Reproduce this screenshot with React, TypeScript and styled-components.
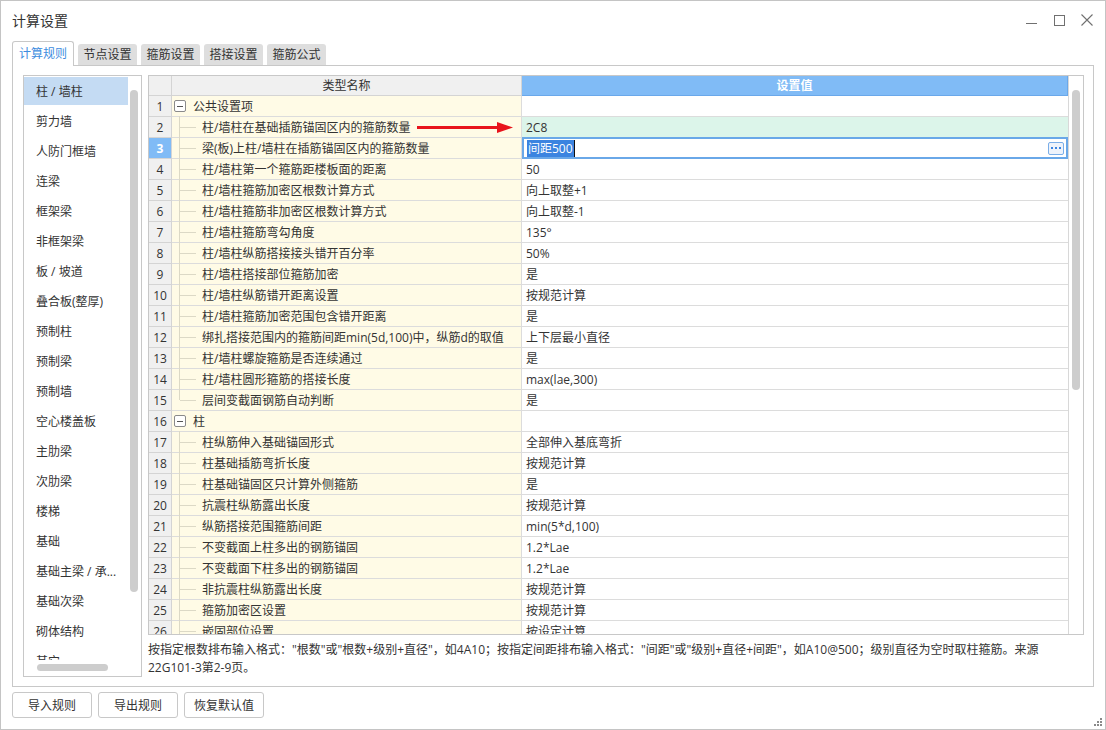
import React from 'react';
import styled, { createGlobalStyle } from 'styled-components';

const Global = createGlobalStyle`
  html, body { margin: 0; padding: 0; background: #fff; }
  body {
    font-family: "Open Sans", "Noto Sans CJK SC", sans-serif;
    font-size: 12px;
    color: #333;
  }
  * { box-sizing: border-box; }
`;

const Window = styled.div`
  position: relative;
  width: 1106px;
  height: 730px;
  border: 1px solid #c4c4c4;
  background: #fff;
  display: flex;
  flex-direction: column;
  overflow: hidden;
`;

const TitleBar = styled.div`
  height: 40px;
  flex: none;
  display: flex;
  align-items: center;
  justify-content: space-between;
  padding-left: 11px;
  padding-right: 4px;
`;

const Title = styled.div`
  font-size: 14px;
  color: #333;
  line-height: 20px;
`;

const Controls = styled.div`
  align-self: flex-start;
  margin-top: 5px;
  display: flex;
`;

const ControlButton = styled.div`
  width: 28px;
  height: 28px;
  display: flex;
  align-items: center;
  justify-content: center;
  color: #707070;
`;

const Body = styled.div`
  padding: 0 11px;
  display: flex;
  flex-direction: column;
`;

const TabStrip = styled.div`
  height: 24px;
  display: flex;
  align-items: flex-end;
  gap: 4px;
  position: relative;
  z-index: 1;
`;

const Tab = styled.div<{ $active?: boolean }>`
  width: ${p => (p.$active ? 62 : 59)}px;
  height: ${p => (p.$active ? 25 : 21)}px;
  margin-bottom: ${p => (p.$active ? -1 : 0)}px;
  display: flex;
  align-items: center;
  justify-content: center;
  border-radius: 3px 3px 0 0;
  font-size: 12px;
  line-height: 16px;
  background: ${p => (p.$active ? '#fff' : '#dedede')};
  color: ${p => (p.$active ? '#3d8de0' : '#333')};
  border: ${p => (p.$active ? '1px solid #c8c8c8' : 'none')};
  border-bottom: none;
`;

const Panel = styled.div`
  height: 622px;
  border: 1px solid #c8c8c8;
  padding: 9px 9px 9px 10px;
  display: flex;
  gap: 6px;
`;

const ListBox = styled.div`
  position: relative;
  width: 119px;
  height: 602px;
  border: 1px solid #c8c8c8;
  overflow: hidden;
  padding-top: 1px;
`;

const ListItem = styled.div<{ $selected?: boolean }>`
  width: 104px;
  height: 28px;
  margin-bottom: 2px;
  padding-left: 12px;
  padding-top: 2px;
  line-height: 26px;
  white-space: nowrap;
  font-size: 12px;
  color: #333;
  background: ${p => (p.$selected ? '#c4dbf3' : 'transparent')};
`;

const VThumb = styled.div<{ $left: number; $top: number; $h: number }>`
  position: absolute;
  left: ${p => p.$left}px;
  top: ${p => p.$top}px;
  width: 8px;
  height: ${p => p.$h}px;
  border-radius: 4px;
  background: #cdcdcd;
`;

const HTrack = styled.div`
  position: absolute;
  left: 0;
  right: 0;
  bottom: 0;
  height: 16px;
  background: #fff;
`;

const HThumb = styled.div`
  position: absolute;
  left: 13px;
  top: 4px;
  width: 71px;
  height: 7px;
  border-radius: 4px;
  background: #cdcdcd;
`;

const RightPane = styled.div`
  flex: 1;
  display: flex;
  flex-direction: column;
`;

const Grid = styled.div`
  height: 561px;
  border: 1px solid #c8c8c8;
  display: flex;
  overflow: hidden;
`;

const GridMain = styled.div`
  width: 919px;
  display: flex;
  flex-direction: column;
  overflow: hidden;
`;

const ScrollCol = styled.div`
  position: relative;
  width: 15px;
  border-left: 1px solid #d8d8d8;
`;

const Row = styled.div<{ $header?: boolean }>`
  flex: none;
  display: flex;
  height: ${p => (p.$header ? 20 : 21)}px;
`;

const NumCell = styled.div<{ $active?: boolean }>`
  width: 23px;
  flex: none;
  border-right: 1px solid #d4d4d4;
  border-bottom: 1px solid #d4d4d4;
  background: ${p => (p.$active ? '#80bbf6' : '#f0f0f0')};
  color: ${p => (p.$active ? '#fff' : '#333')};
  font-weight: ${p => (p.$active ? 700 : 400)};
  text-align: center;
  padding-top: 1px;
  line-height: 19px;
  font-size: 12px;
`;

const HeadName = styled.div`
  width: 350px;
  flex: none;
  background: #f0f0f0;
  border-right: 1px solid #d4d4d4;
  border-bottom: 1px solid #d4d4d4;
  text-align: center;
  padding-top: 1px;
  line-height: 18px;
`;

const HeadValue = styled.div`
  flex: 1;
  background: #80bbf6;
  border-right: 1px solid #6aa8ea;
  border-bottom: 1px solid #6aa8ea;
  color: #fff;
  font-weight: 700;
  text-align: center;
  padding-top: 1px;
  line-height: 18px;
`;

const NameCell = styled.div<{ $kind: 'group' | 'child' | 'last' }>`
  position: relative;
  width: 350px;
  flex: none;
  background: #fffbe6;
  border-right: 1px solid #dcdcdc;
  border-bottom: 1px solid #dcdcdc;
  padding-left: ${p => (p.$kind === 'group' ? 2 : 30)}px;
  padding-top: 1px;
  display: flex;
  align-items: center;
  white-space: nowrap;
  line-height: 19px;

  ${p =>
    p.$kind !== 'group'
      ? `
    &::before {
      content: '';
      position: absolute;
      left: 7px;
      top: -1px;
      width: 1px;
      height: ${p.$kind === 'last' ? 11 : 21}px;
      background: #dcd9c6;
    }
    &::after {
      content: '';
      position: absolute;
      left: 8px;
      top: 10px;
      width: 16px;
      height: 1px;
      background: #dcd9c6;
    }`
      : ''}
`;

const Toggle = styled.span`
  width: 12px;
  height: 12px;
  border: 1px solid #8a8a8a;
  border-radius: 2px;
  background: #fff;
  display: inline-flex;
  align-items: center;
  justify-content: center;
  margin-right: 7px;
  margin-top: -1px;
  &::after {
    content: '';
    width: 6px;
    height: 1px;
    background: #555;
  }
`;

const ValueCell = styled.div<{ $mint?: boolean; $editing?: boolean }>`
  flex: 1;
  display: flex;
  align-items: center;
  white-space: nowrap;
  line-height: 18px;
  background: ${p => (p.$mint ? '#dcf5ea' : '#fff')};
  border-bottom: ${p => (p.$editing ? '2px solid #6aa8e8' : '1px solid #dcdcdc')};
  border-top: ${p => (p.$editing ? '2px solid #6aa8e8' : 'none')};
  border-left: ${p => (p.$editing ? '2px solid #6aa8e8' : 'none')};
  border-right: ${p => (p.$editing ? '2px solid #6aa8e8' : 'none')};
  margin-top: ${p => (p.$editing ? -1 : 0)}px;
  height: ${p => (p.$editing ? 22 : 21)}px;
  padding-left: ${p => (p.$editing ? 3 : 4)}px;
  padding-top: 1px;
`;

const Selected = styled.span`
  background: #3b84e0;
  color: #fff;
  padding: 0 1px;
  border-right: 1px solid #111;
  line-height: 17px;
`;

const DotsButton = styled.div`
  margin-left: auto;
  margin-right: 2px;
  margin-top: -1px;
  width: 16px;
  height: 13px;
  border: 1px solid #7aaee8;
  border-radius: 2px;
  background: #eef3fb;
  display: flex;
  align-items: center;
  justify-content: center;
  gap: 2px;
`;

const Dot = styled.span`
  width: 2px;
  height: 2px;
  background: #3b84e0;
`;

const ArrowWrap = styled.svg`
  position: absolute;
  left: 245px;
  top: 5px;
`;

const Note = styled.div`
  margin-top: 6px;
  line-height: 18px;
  font-size: 12px;
  color: #333;
  white-space: nowrap;
`;

const ButtonBar = styled.div`
  padding: 5px 11px 0;
  display: flex;
  gap: 6px;
`;

const Button = styled.button`
  width: 80px;
  height: 26px;
  border: 1px solid #c8c8c8;
  border-radius: 3px;
  background: #fff;
  font-family: inherit;
  font-size: 12px;
  color: #333;
  padding: 0;
`;

const Grip = styled.svg`
  position: absolute;
  right: 3px;
  bottom: 3px;
`;

const listItems = [
  '柱 / 墙柱', '剪力墙', '人防门框墙', '连梁', '框架梁', '非框架梁', '板 / 坡道', '叠合板(整厚)',
  '预制柱', '预制梁', '预制墙', '空心楼盖板', '主肋梁', '次肋梁', '楼梯', '基础', '基础主梁 / 承...',
  '基础次梁', '砌体结构', '其它',
];

type RowData = { group?: string; name?: string; v: string; last?: boolean };

const rows: RowData[] = [
  { group: '公共设置项', v: '' },
  { name: '柱/墙柱在基础插筋锚固区内的箍筋数量', v: '2C8' },
  { name: '梁(板)上柱/墙柱在插筋锚固区内的箍筋数量', v: '间距500' },
  { name: '柱/墙柱第一个箍筋距楼板面的距离', v: '50' },
  { name: '柱/墙柱箍筋加密区根数计算方式', v: '向上取整+1' },
  { name: '柱/墙柱箍筋非加密区根数计算方式', v: '向上取整-1' },
  { name: '柱/墙柱箍筋弯勾角度', v: '135°' },
  { name: '柱/墙柱纵筋搭接接头错开百分率', v: '50%' },
  { name: '柱/墙柱搭接部位箍筋加密', v: '是' },
  { name: '柱/墙柱纵筋错开距离设置', v: '按规范计算' },
  { name: '柱/墙柱箍筋加密范围包含错开距离', v: '是' },
  { name: '绑扎搭接范围内的箍筋间距min(5d,100)中，纵筋d的取值', v: '上下层最小直径' },
  { name: '柱/墙柱螺旋箍筋是否连续通过', v: '是' },
  { name: '柱/墙柱圆形箍筋的搭接长度', v: 'max(lae,300)' },
  { name: '层间变截面钢筋自动判断', v: '是', last: true },
  { group: '柱', v: '' },
  { name: '柱纵筋伸入基础锚固形式', v: '全部伸入基底弯折' },
  { name: '柱基础插筋弯折长度', v: '按规范计算' },
  { name: '柱基础锚固区只计算外侧箍筋', v: '是' },
  { name: '抗震柱纵筋露出长度', v: '按规范计算' },
  { name: '纵筋搭接范围箍筋间距', v: 'min(5*d,100)' },
  { name: '不变截面上柱多出的钢筋锚固', v: '1.2*Lae' },
  { name: '不变截面下柱多出的钢筋锚固', v: '1.2*Lae' },
  { name: '非抗震柱纵筋露出长度', v: '按规范计算' },
  { name: '箍筋加密区设置', v: '按规范计算' },
  { name: '嵌固部位设置', v: '按设定计算' },
  { name: '插筋信息', v: '按规范计算' },
];

const tabs = ['计算规则', '节点设置', '箍筋设置', '搭接设置', '箍筋公式'];

export default function App() {
  return (
    <>
      <Global />
      <Window>
        <TitleBar>
          <Title>计算设置</Title>
          <Controls>
            <ControlButton>
              <svg width="11" height="11" viewBox="0 0 11 11">
                <line x1="0" y1="8.5" x2="11" y2="8.5" stroke="currentColor" strokeWidth="1" />
              </svg>
            </ControlButton>
            <ControlButton>
              <svg width="11" height="11" viewBox="0 0 11 11">
                <rect x="0.5" y="0.5" width="10" height="10" fill="none" stroke="currentColor" strokeWidth="1" />
              </svg>
            </ControlButton>
            <ControlButton>
              <svg width="12" height="12" viewBox="0 0 12 12">
                <path d="M0.5 0.5 L11.5 11.5 M11.5 0.5 L0.5 11.5" stroke="currentColor" strokeWidth="1.1" />
              </svg>
            </ControlButton>
          </Controls>
        </TitleBar>
        <Body>
          <TabStrip>
            {tabs.map((t, i) => (
              <Tab key={t} $active={i === 0}>{t}</Tab>
            ))}
          </TabStrip>
          <Panel>
            <ListBox>
              {listItems.map((it, i) => (
                <ListItem key={it} $selected={i === 0}>{it}</ListItem>
              ))}
              <VThumb $left={106} $top={14} $h={502} />
              <HTrack>
                <HThumb />
              </HTrack>
            </ListBox>
            <RightPane>
              <Grid>
                <GridMain>
                  <Row $header>
                    <NumCell />
                    <HeadName>类型名称</HeadName>
                    <HeadValue>设置值</HeadValue>
                  </Row>
                  {rows.map((r, i) => {
                    const n = i + 1;
                    return (
                      <Row key={n}>
                        <NumCell $active={n === 3}>{n}</NumCell>
                        <NameCell $kind={r.group ? 'group' : r.last ? 'last' : 'child'}>
                          {r.group ? (
                            <>
                              <Toggle />
                              {r.group}
                            </>
                          ) : (
                            r.name
                          )}
                          {n === 2 && (
                            <ArrowWrap width="96" height="11" viewBox="0 0 96 11">
                              <rect x="0" y="4" width="82" height="3" fill="#e8141c" />
                              <polygon points="80,0 96,5.5 80,11" fill="#e8141c" />
                            </ArrowWrap>
                          )}
                        </NameCell>
                        {n === 3 ? (
                          <ValueCell $editing>
                            <Selected>{r.v}</Selected>
                            <DotsButton>
                              <Dot />
                              <Dot />
                              <Dot />
                            </DotsButton>
                          </ValueCell>
                        ) : (
                          <ValueCell $mint={n === 2}>{r.v}</ValueCell>
                        )}
                      </Row>
                    );
                  })}
                </GridMain>
                <ScrollCol>
                  <VThumb $left={3} $top={14} $h={300} />
                </ScrollCol>
              </Grid>
              <Note>
                按指定根数排布输入格式："根数"或"根数+级别+直径"，如4A10；按指定间距排布输入格式："间距"或"级别+直径+间距"，如A10@500；级别直径为空时取柱箍筋。来源
                <br />
                22G101-3第2-9页。
              </Note>
            </RightPane>
          </Panel>
        </Body>
        <ButtonBar>
          <Button>导入规则</Button>
          <Button>导出规则</Button>
          <Button>恢复默认值</Button>
        </ButtonBar>
        <Grip width="9" height="9" viewBox="0 0 9 9">
          <rect x="7" y="1" width="2" height="2" fill="#8a8a8a" />
          <rect x="4" y="4" width="2" height="2" fill="#8a8a8a" />
          <rect x="7" y="4" width="2" height="2" fill="#8a8a8a" />
          <rect x="1" y="7" width="2" height="2" fill="#8a8a8a" />
          <rect x="4" y="7" width="2" height="2" fill="#8a8a8a" />
          <rect x="7" y="7" width="2" height="2" fill="#8a8a8a" />
        </Grip>
      </Window>
    </>
  );
}
